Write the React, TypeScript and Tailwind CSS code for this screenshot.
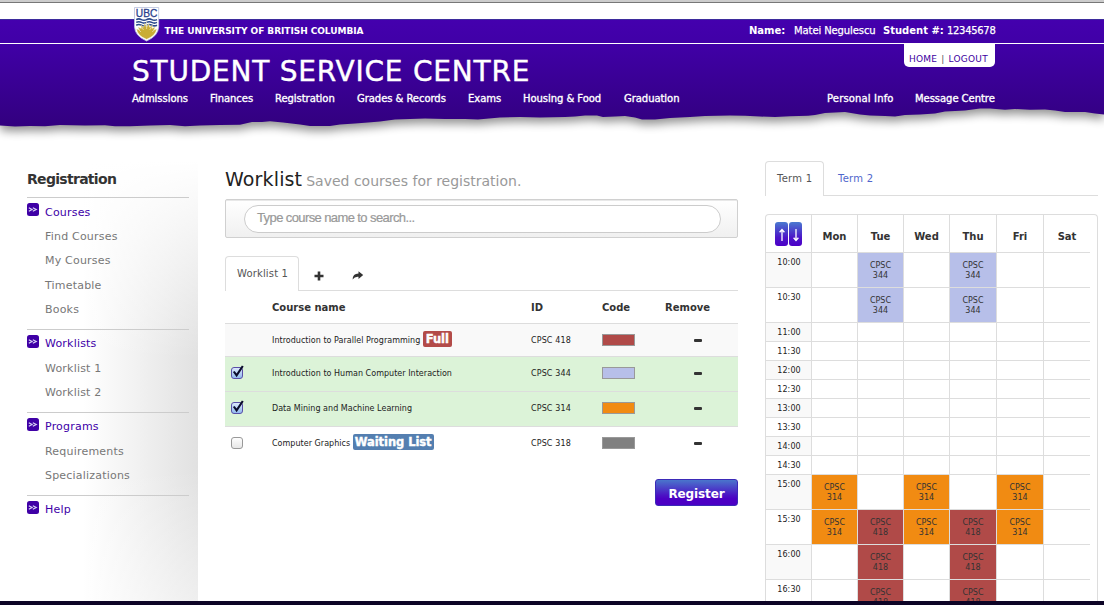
import React from "react";

const NAV_LEFT = [
  { label: "Admissions", cls: "w-[78px]" },
  { label: "Finances", cls: "w-[65px]" },
  { label: "Registration", cls: "w-[82px]" },
  { label: "Grades & Records", cls: "w-[111px]" },
  { label: "Exams", cls: "w-[55px]" },
  { label: "Housing & Food", cls: "w-[101px]" },
  { label: "Graduation", cls: "w-[203px]" },
  { label: "Personal Info", cls: "w-[88px] tracking-[0.15px]" },
  { label: "Message Centre", cls: "" },
];

const MENU = [
  { title: "Courses", items: ["Find Courses", "My Courses", "Timetable", "Books"] },
  { title: "Worklists", items: ["Worklist 1", "Worklist 2"] },
  { title: "Programs", items: ["Requirements", "Specializations"] },
  { title: "Help", items: [] },
];

type Course = {
  name: string;
  id: string;
  swatch: string;
  row: string;
  checked: boolean | null;
  badge?: { text: string; cls: string };
};

const COURSES: Course[] = [
  {
    name: "Introduction to Parallel Programming",
    id: "CPSC 418",
    swatch: "bg-[#b04a48]",
    row: "h-[33px] bg-[#f9f9f9]",
    checked: null,
    badge: { text: "Full", cls: "w-[29px] bg-[#b34b49]" },
  },
  {
    name: "Introduction to Human Computer Interaction",
    id: "CPSC 344",
    swatch: "bg-[#b7bfe9]",
    row: "h-[35px] bg-[#dcf3d8] pb-[2px]",
    checked: true,
  },
  {
    name: "Data Mining and Machine Learning",
    id: "CPSC 314",
    swatch: "bg-[#f18b12]",
    row: "h-[35px] bg-[#dcf3d8] pb-[2px]",
    checked: true,
  },
  {
    name: "Computer Graphics",
    id: "CPSC 318",
    swatch: "bg-[#808080]",
    row: "h-[35px] bg-white pb-[2px]",
    checked: false,
    badge: { text: "Waiting List", cls: "w-[81px] bg-[#547fb0]" },
  },
];

const DAYS = ["Mon", "Tue", "Wed", "Thu", "Fri", "Sat"];

const SLOTS: { time: string; cells?: string[] }[] = [
  { time: "10:00", cells: ["", "344", "", "344", "", ""] },
  { time: "10:30", cells: ["", "344", "", "344", "", ""] },
  { time: "11:00" },
  { time: "11:30" },
  { time: "12:00" },
  { time: "12:30" },
  { time: "13:00" },
  { time: "13:30" },
  { time: "14:00" },
  { time: "14:30" },
  { time: "15:00", cells: ["314", "", "314", "", "314", ""] },
  { time: "15:30", cells: ["314", "418", "314", "418", "314", ""] },
  { time: "16:00", cells: ["", "418", "", "418", "", ""] },
  { time: "16:30", cells: ["", "418", "", "418", "", ""] },
];

const CELL_COLOR: Record<string, string> = {
  "": "",
  "344": "bg-[#b7bfe9]",
  "314": "bg-[#f18b12]",
  "418": "bg-[#b04a48]",
};

const EDGE =
  "M0 19H1104V114.5L1095 113.5 1085 112 1065 112 1055 110.5 1045 109.5 1030 109.8 1015 109 1005 109.8 990 108.5 980 108.5 965 110.5 945 111.5 935 113.5 920 114.5 905 115 895 116.5 885 116 870 115.5 860 114.5 845 112 825 113 815 115 808 115.8 790 116.3 775 117 760 116.5 745 115.8 730 115.5 705 116 690 117 670 118 655 119.5 642 119.5 635 117.5 625 116 615 116.5 603 117 597 115.5 585 115.5 575 116.5 565 117 540 117.5 520 117 500 117.5 478 119.5 465 119 445 119 425 118.5 410 119 395 119.5 380 121.5 368 122.5 355 123.5 340 124.5 330 126 310 126 300 124.5 283 122.5 270 121.2 262 122 252 122 240 124.8 220 125 200 125.5 185 126.3 170 125 150 125.5 130 126.3 115 126.3 105 125.3 85 125.5 60 125 45 126.3 30 126 15 126.6 0 125.5Z";

function HeaderBackdrop() {
  return (
    <svg className="absolute left-0 top-0" width="1104" height="150" viewBox="0 0 1104 150">
      <defs>
        <linearGradient id="purple" x1="0" y1="19" x2="0" y2="126" gradientUnits="userSpaceOnUse">
          <stop offset="0" stopColor="#4400ae" />
          <stop offset="0.25" stopColor="#4000a6" />
          <stop offset="1" stopColor="#32007f" />
        </linearGradient>
        <filter id="soft" x="-5%" y="-20%" width="110%" height="150%">
          <feGaussianBlur stdDeviation="5" />
        </filter>
        <clipPath id="below">
          <rect x="0" y="60" width="1104" height="90" />
        </clipPath>
      </defs>
      <g clipPath="url(#below)">
        <path d={EDGE} transform="translate(0 5)" fill="#000" opacity="0.42" filter="url(#soft)" />
      </g>
      <path d={EDGE} fill="url(#purple)" />
      <rect x="0" y="19" width="1104" height="1" fill="#3d2b9c" />
      <rect x="0" y="43" width="1104" height="1" fill="#fff" />
    </svg>
  );
}

function Crest() {
  return (
    <svg width="26" height="36" viewBox="0 0 26 36">
      <path d="M.5 .5H24.7V20Q24.2 29 12.6 34Q1 29 .5 20Z" fill="#fff" stroke="#b9c0dc" strokeWidth="0.8" />
      <text x="12.6" y="10.2" textAnchor="middle" fontFamily="Liberation Sans, sans-serif" fontSize="10.5" textLength="21.5" lengthAdjust="spacingAndGlyphs" fill="#2b3f8c" stroke="#2b3f8c" strokeWidth="0.3">
        UBC
      </text>
      <g fill="none" stroke="#2b4a8c" strokeWidth="1.6">
        <path d="M2.2 12.6q2.6 -1.4 5.2 0t5.2 0t5.2 0t5.2 0" />
        <path d="M2.2 15.4q2.6 -1.4 5.2 0t5.2 0t5.2 0t5.2 0" />
        <path d="M2.2 18.2q2.6 -1.4 5.2 0t5.2 0t5.2 0t5.2 0" />
      </g>
      <path d="M2.6 22L5.5 23 4 20 7.3 21.4 6.8 18 9.6 20.2 10.4 16.5 12 19.5 12.6 14.5 13.2 19.5 14.8 16.5 15.6 20.2 18.4 18 17.9 21.4 21.2 20 19.7 23 22.6 22Q21.8 28.5 12.6 32.3Q3.4 28.5 2.6 22Z" fill="#c9ad35" stroke="#f5efd0" strokeWidth="0.4" />
      <path d="M12.6 22V16M9.5 23L7.5 19.5M15.7 23L17.7 19.5M7 25L4.5 22.5M18.2 25L20.7 22.5" stroke="#f7f2dc" strokeWidth="0.6" />
    </svg>
  );
}

function Header() {
  return (
    <header className="relative h-[161px] w-full">
      <HeaderBackdrop />
      <div className="relative flex h-full flex-col text-white">
        <div className="h-[3px] shrink-0 border-b border-[#777] bg-[#ccc]" />
        <div className="flex h-[41px] shrink-0 pl-[134px] pr-[108px] pt-[4px]">
          <Crest />
          <div className="ml-[4.5px] mt-[18px] grow text-[9px] font-bold leading-[12px] tracking-[-0.05px]">
            THE UNIVERSITY OF BRITISH COLUMBIA
          </div>
          <div className="mt-[18px] flex whitespace-pre text-[10px] leading-[12px] tracking-[-0.05px]">
            <b className="w-[45px] tracking-[0px]">Name:</b>
            <span className="w-[89px] tracking-[-0.1px] [-webkit-text-stroke:0.25px_white]">Matei Negulescu</span>
            <b className="w-[64px] tracking-[0px]">Student #:</b>
            <span className="w-[49px] tracking-[-0.3px] [-webkit-text-stroke:0.25px_white]">12345678</span>
          </div>
        </div>
        <div className="flex h-[45px] shrink-0 items-start justify-between pl-[132px] pr-[109px]">
          <h1 className="pt-[11px] text-[28px] leading-[34px] tracking-[0.78px] [-webkit-text-stroke:0.4px_white]">
            STUDENT SERVICE CENTRE
          </h1>
          <div className="h-[23px] w-[91px] whitespace-nowrap rounded-b-[5px] bg-white pl-[5px] pt-[9px] text-[9px] leading-[12px] tracking-[0.22px] text-[#3d00a0]">
            HOME <span className="px-[1px] text-[#555]">|</span> LOGOUT
          </div>
        </div>
        <nav className="flex shrink-0 whitespace-nowrap pl-[132px] pt-[3px] text-[10px] leading-[13px] tracking-[-0.05px] [-webkit-text-stroke:0.35px_white]">
          {NAV_LEFT.map((n) => (
            <a key={n.label} className={n.cls}>
              {n.label}
            </a>
          ))}
        </nav>
      </div>
    </header>
  );
}

function Sidebar() {
  return (
    <aside className="relative h-[440px] w-[198px] shrink-0 bg-[linear-gradient(to_bottom,white_0%,rgba(255,255,255,0)_45%,rgba(255,255,255,0)_70%,rgba(255,255,255,0.45)_100%),linear-gradient(to_right,white_42%,#f2f2f2_68%,#e1e1e1_100%)] pl-[27px] pr-[9px]">
      <h2 className="h-[36px] pt-[9px] text-[14px] font-bold leading-[18px] tracking-[-0.7px] text-[#333]">Registration</h2>
      {MENU.map((g) => (
        <section key={g.title} className="border-t border-[#ccc] pb-[6.35px] pt-[2.65px] text-[11px] tracking-[0.2px]">
          <div className="flex h-[24.33px] items-center">
            <svg className="relative -top-[3px] mr-[6px]" width="12" height="13" viewBox="0 0 12 13">
              <rect width="12" height="13" rx="2.5" fill="#3f00a6" />
              <path d="M1.8 4.8L5 6.5 1.8 8.2M5.8 4.8L9.2 6.5 5.8 8.2" fill="none" stroke="#d9d4f5" strokeWidth="1.2" />
            </svg>
            <a className="text-[#4000a8]">{g.title}</a>
          </div>
          {g.items.map((t) => (
            <div key={t} className="h-[24.33px] pl-[18px] leading-[24.33px] text-[#777]">
              {t}
            </div>
          ))}
        </section>
      ))}
    </aside>
  );
}

function Check({ on }: { on: boolean }) {
  return (
    <svg className="-mt-[4px]" width="16" height="17" viewBox="0 0 16 17">
      <defs>
        <linearGradient id={on ? "ck1" : "ck0"} x1="0" y1="0" x2="0" y2="1">
          <stop offset="0" stopColor={on ? "#dfeafc" : "#ffffff"} />
          <stop offset="1" stopColor={on ? "#8fb8ee" : "#e6e6e6"} />
        </linearGradient>
      </defs>
      <rect x="1.5" y="4.5" width="11" height="11" rx="2.5" fill={on ? "url(#ck1)" : "url(#ck0)"} stroke={on ? "#5a4fa8" : "#999"} />
      {on && <path d="M3.8 8.5L6.6 12.3L12.8 3" fill="none" stroke="#0c0c2c" strokeWidth="2.1" />}
    </svg>
  );
}

function Worklist() {
  return (
    <main className="ml-[27px] w-[513px] shrink-0">
      <div className="flex h-[38px] items-baseline whitespace-nowrap pt-[5px]">
        <h1 className="text-[19px] leading-[26px] tracking-[0.15px] text-[#222]">Worklist</h1>
        <small className="ml-[4px] text-[14px] leading-[20px] tracking-[0px] text-[#999]">Saved courses for registration.</small>
      </div>
      <div className="h-[39px] rounded-[2px] border border-[#d0d0d0] bg-gradient-to-b from-white to-[#f0f0f0] px-[18px] pt-[5px] shadow-[inset_0_1px_0_#e8e8e8]">
        <div className="h-[28px] w-[477px] rounded-full border border-[#ccc] bg-white pl-[12px] font-['Liberation_Sans',sans-serif] text-[13px] leading-[24px] tracking-[-0.6px] text-[#999] [-webkit-text-stroke:0.2px_#999]">
          Type course name to search...
        </div>
      </div>
      <div className="mt-[18px] flex h-[35px] border-b border-[#ddd]">
        <div className="h-[35px] w-[74px] rounded-t-[4px] border border-b-0 border-[#ddd] bg-white pl-[11px] text-[10px] leading-[33px] tracking-[0.15px] text-[#555]">
          Worklist 1
        </div>
        <svg className="ml-[15px] mt-[15px]" width="10" height="10" viewBox="0 0 10 10">
          <path d="M3.7 .5h2.6v3.2h3.2v2.6h-3.2v3.2h-2.6v-3.2h-3.2v-2.6h3.2z" fill="#333" />
        </svg>
        <svg className="ml-[28px] mt-[15px]" width="12" height="10" viewBox="0 0 12 10">
          <path d="M6.5 .3L11.2 4.1L6.5 7.9V5.8Q2.6 5.4 .6 8.6Q.6 2.6 6.5 2.5Z" fill="#333" />
        </svg>
      </div>
      <div className="grid h-[32px] grid-cols-[47px_259px_71px_63px_73px] text-[10px] font-bold leading-[33px] tracking-[0px] text-[#333]">
        <span />
        <span>Course name</span>
        <span>ID</span>
        <span>Code</span>
        <span>Remove</span>
      </div>
      {COURSES.map((c) => (
        <div key={c.id} className={`grid grid-cols-[47px_259px_71px_63px_73px] items-center border-t border-[#ddd] text-[8px] text-[#222] ${c.row}`}>
          <div className="pl-[5px]">{c.checked !== null && <Check on={c.checked} />}</div>
          <div className="flex items-center whitespace-nowrap">
            <span className="pt-[2px] tracking-[0.03px]">{c.name}</span>
            {c.badge && (
              <span className={`-mt-[2px] ml-[2.5px] flex h-[16px] items-center justify-center rounded-[2px] text-[11.5px] font-bold leading-[15px] tracking-[-0.05px] text-white [-webkit-text-stroke:0.4px_white] ${c.badge.cls}`}>
                {c.badge.text}
              </span>
            )}
          </div>
          <div className="pt-[2px] tracking-[0.12px]">{c.id}</div>
          <div className={`h-[12px] w-[33px] border border-[#999] ${c.swatch}`} />
          <div className="ml-[29px] h-[3px] w-[8px] rounded-[1px] bg-[#333]" />
        </div>
      ))}
      <div className="mt-[18px] flex justify-end">
        <button className="h-[27px] w-[83px] rounded-[3px] border border-[#3b2ab8] bg-[linear-gradient(to_bottom,#4a76cc_0%,#4b14c4_60%,#4c00c4_75%,#4c00c4_100%)] pt-px text-[12px] font-bold leading-[26px] tracking-[-0.1px] text-white">
          Register
        </button>
      </div>
    </main>
  );
}

function SortButton({ up }: { up: boolean }) {
  return (
    <button className="flex h-[24px] w-[13px] items-center justify-center rounded-[3px] bg-[linear-gradient(to_bottom,#4a7ad0_0%,#4b14c8_65%,#4c00c8_100%)]">
      <svg className="mt-px" width="8" height="14" viewBox="0 0 8 14">
        <path d={up ? "M4 13V1.5M1.6 4.2L4 1.5L6.4 4.2" : "M4 1V12.5M1.6 9.8L4 12.5L6.4 9.8"} fill="none" stroke="#fff" strokeWidth="1.3" />
      </svg>
    </button>
  );
}

function Timetable() {
  return (
    <section className="ml-[27px] w-[333px] shrink-0">
      <div className="flex h-[35px] border-b border-[#ddd] text-[10px] tracking-[0.25px]">
        <div className="h-[35px] w-[59px] rounded-t-[4px] border border-b-0 border-[#ddd] bg-white pl-[11px] leading-[33px] text-[#555]">Term 1</div>
        <div className="ml-[14px] leading-[35px] text-[#4f66cc]">Term 2</div>
      </div>
      <div className="mt-[18px] h-[388px] overflow-hidden rounded-t-[4px] border border-b-0 border-[#ddd]">
        <div className="-ml-px grid h-[37px] w-[325px] grid-cols-[46px_46px_46px_46px_47px_47px_47px]">
          <div className="flex justify-center gap-[1px] pl-px pt-[7px]">
            <SortButton up />
            <SortButton up={false} />
          </div>
          {DAYS.map((d) => (
            <div key={d} className="border-l border-[#ddd] pt-[15px] text-center text-[10px] font-bold leading-[13px] text-[#333]">
              {d}
            </div>
          ))}
        </div>
        {SLOTS.map((s, i) => (
          <div
            key={s.time}
            className={`-ml-px grid w-[325px] grid-cols-[46px_46px_46px_46px_47px_47px_47px] border-t border-[#ddd] text-center text-[8px] leading-[10px] text-[#333] ${s.cells ? "h-[35px]" : "h-[19px]"}`}
          >
            <div className={`ml-px pl-px pt-[5px] tracking-[0.1px] text-[#222] ${i % 2 === 0 ? "bg-[#f9f9f9]" : ""}`}>{s.time}</div>
            {(s.cells ?? ["", "", "", "", "", ""]).map((c, k) => (
              <div key={k} className={`border-l border-[#ddd] pt-[8px] ${CELL_COLOR[c]}`}>
                {c && (
                  <>
                    CPSC
                    <br />
                    {c}
                  </>
                )}
              </div>
            ))}
          </div>
        ))}
      </div>
    </section>
  );
}

export default function App() {
  return (
    <div className="flex h-[605px] w-[1104px] flex-col overflow-hidden bg-white font-['DejaVu_Sans',Verdana,sans-serif]">
      <Header />
      <div className="flex h-[440px] w-full overflow-hidden">
        <Sidebar />
        <Worklist />
        <Timetable />
      </div>
      <div className="h-[4px] w-full bg-[#0d0426]" />
    </div>
  );
}
